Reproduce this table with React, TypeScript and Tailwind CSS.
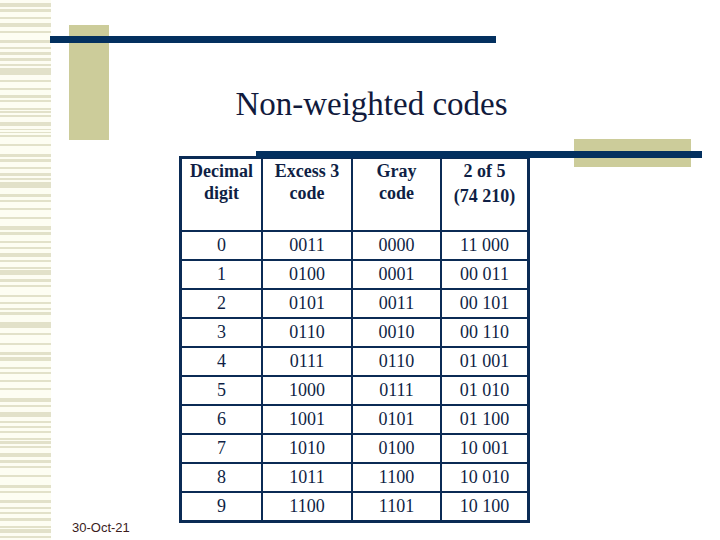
import React from "react";

const stripes: [number, number][] = [
  [3, 4], [9, 3], [17, 2], [23, 4], [31, 2], [40, 3], [47, 2], [52, 3], [58, 3], [64, 2],
  [68, 7], [80, 2], [88, 2], [95, 3], [100, 2], [108, 2], [111, 2], [115, 2], [122, 4], [129, 1],
  [132, 1], [135, 2], [144, 2], [154, 3], [159, 3], [167, 2], [173, 3], [178, 2], [182, 6], [194, 3],
  [200, 2], [208, 2], [217, 2], [226, 4], [232, 3], [241, 2], [247, 2], [253, 4], [260, 2], [267, 2],
  [270, 5], [279, 3], [285, 2], [295, 2], [302, 2], [308, 2], [312, 3], [322, 6], [333, 2], [343, 2],
  [352, 3], [357, 4], [367, 2], [372, 2], [380, 2], [388, 2], [398, 4], [405, 2], [412, 5], [421, 2],
  [426, 2], [431, 2], [438, 2], [441, 3], [446, 2], [453, 4], [460, 3], [466, 2], [475, 2], [485, 3],
  [491, 2], [500, 3], [507, 2], [512, 2], [518, 3], [526, 2], [529, 4], [536, 2],
];

const header = [
  ["Decimal", "digit"],
  ["Excess 3", "code"],
  ["Gray", "code"],
  ["2 of 5", "(74 210)"],
];

const rows = [
  ["0", "0011", "0000", "11 000"],
  ["1", "0100", "0001", "00 011"],
  ["2", "0101", "0011", "00 101"],
  ["3", "0110", "0010", "00 110"],
  ["4", "0111", "0110", "01 001"],
  ["5", "1000", "0111", "01 010"],
  ["6", "1001", "0101", "01 100"],
  ["7", "1010", "0100", "10 001"],
  ["8", "1011", "1100", "10 010"],
  ["9", "1100", "1101", "10 100"],
];

export default function App() {
  return (
    <div
      className="relative w-[720px] h-[540px] overflow-hidden bg-white"
      style={{ fontFamily: '"Liberation Serif", "Times New Roman", serif' }}
    >
      {/* left striped band */}
      <svg className="absolute left-0 top-0" width="51" height="540" viewBox="0 0 51 540">
        <rect x="0" y="0" width="51" height="540" fill="#fdfdf2" />
        {stripes.map(([y, h], i) => (
          <rect key={i} x="0" y={y} width="51" height={h} fill="#e2e1c9" />
        ))}
      </svg>

      {/* decorative shapes */}
      <div className="absolute left-[69px] top-[25px] w-[40px] h-[115px] bg-[#cccc9a]" />
      <div className="absolute left-[50px] top-[36px] w-[446px] h-[7px] bg-[#03305f]" />
      <div className="absolute left-[574px] top-[139px] w-[117px] h-[28px] bg-[#cccc9a]" />

      <div className="relative flex flex-col">
        <div className="pt-[86px] pl-[23px] text-center text-[33px] leading-[37px] text-[#111a3c]">
          Non-weighted codes
        </div>

        <div className="mt-[33px] flex flex-row pl-[72px]">
          <div className="w-[107px] flex flex-col justify-end pb-[5px]">
            <div
              className="text-[13px] leading-[15px] text-[#3b1c1c]"
              style={{ fontFamily: '"Liberation Sans", Arial, sans-serif' }}
            >
              30-Oct-21
            </div>
          </div>
          <div className="pb-[17px]">
            <div className="border-[3px] border-[#0b2b55] grid grid-cols-[79px_90px_89px_87px] text-[18px] text-[#0f1f45]">
              {header.map((h, i) => (
                <div
                  key={"h" + i}
                  className={`h-[71px] pt-[1px] text-center font-bold leading-[22px] ${i > 0 ? "border-l-2 border-[#0b2b55]" : ""}`}
                >
                  <div>{h[0]}</div>
                  <div className={i === 3 ? "mt-[3px]" : ""}>{h[1]}</div>
                </div>
              ))}
              {rows.map((r, ri) =>
                r.map((c, ci) => (
                  <div
                    key={ri + "-" + ci}
                    className={`h-[29px] border-t-2 border-[#0b2b55] text-center leading-[27px] ${ci > 0 ? "border-l-2" : ""}`}
                  >
                    {c}
                  </div>
                ))
              )}
            </div>
          </div>
        </div>
      </div>

      {/* navy bar overlapping table top */}
      <div className="absolute left-[256px] top-[151px] w-[446px] h-[7px] bg-[#03305f]" />
    </div>
  );
}
